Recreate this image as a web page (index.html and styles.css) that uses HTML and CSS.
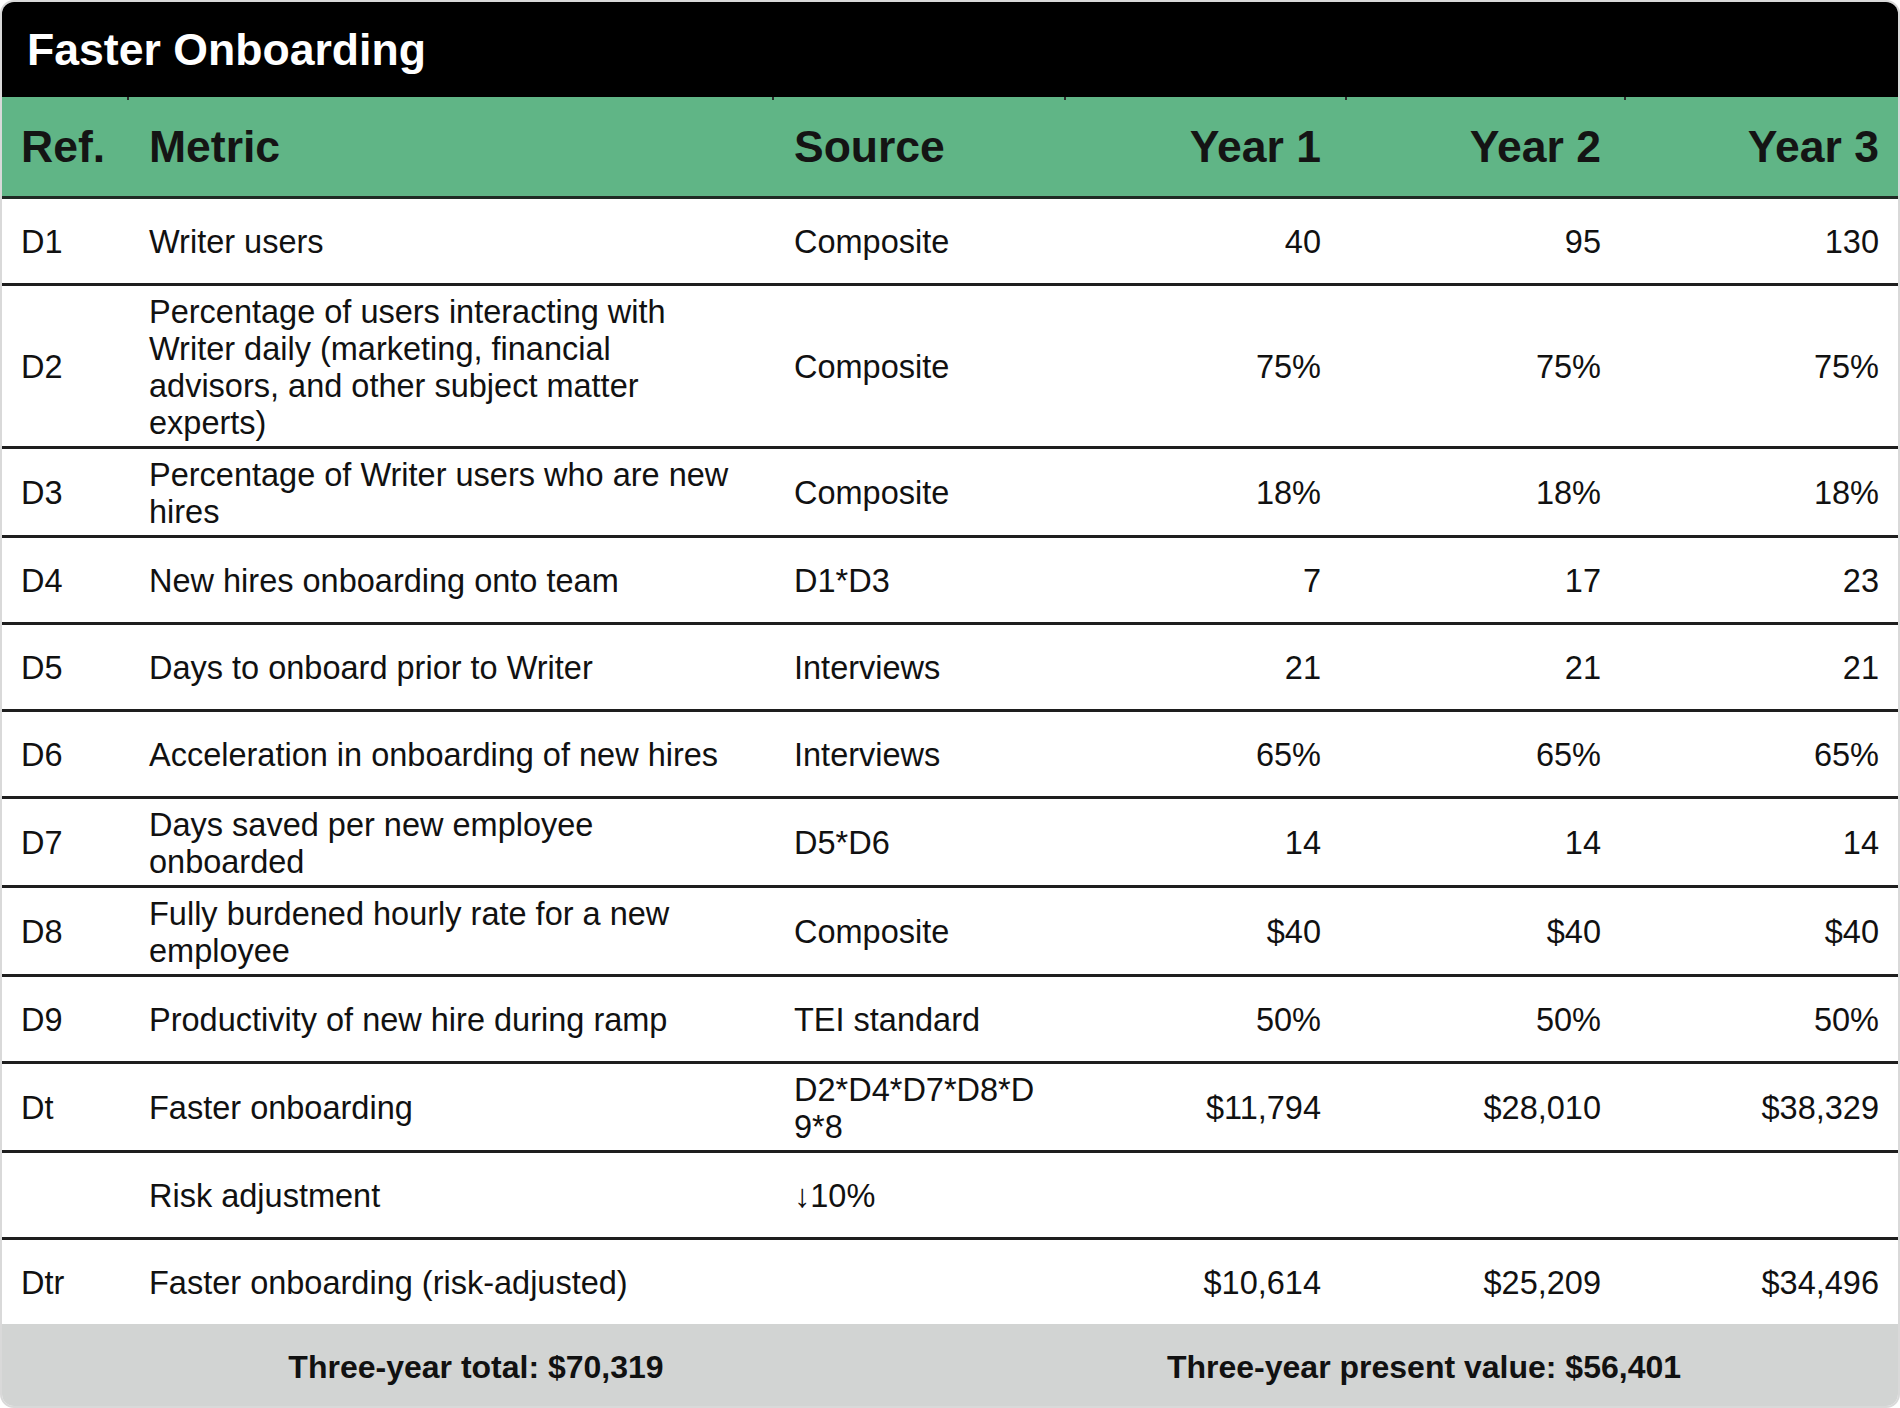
FILE: index.html
```html
<!DOCTYPE html>
<html lang="en">
<head>
<meta charset="utf-8">
<title>Faster Onboarding</title>
<link rel="stylesheet" href="styles.css">
</head>
<body>
<div class="card">
  <div class="title">Faster Onboarding</div>
  <table class="grid">
    <colgroup>
      <col class="c-ref">
      <col class="c-metric">
      <col class="c-source">
      <col class="c-y1">
      <col class="c-y2">
      <col class="c-y3">
    </colgroup>
    <thead>
      <tr>
        <th class="ref">Ref.</th>
        <th class="metric">Metric</th>
        <th class="source">Source</th>
        <th class="num y1">Year 1</th>
        <th class="num y2">Year 2</th>
        <th class="num y3">Year 3</th>
      </tr>
    </thead>
    <tbody>
      <tr>
        <td class="ref">D1</td><td class="metric">Writer users</td><td class="source">Composite</td>
        <td class="num y1">40</td><td class="num y2">95</td><td class="num y3">130</td>
      </tr>
      <tr>
        <td class="ref">D2</td><td class="metric">Percentage of users interacting with Writer daily (marketing, financial advisors, and other subject matter experts)</td><td class="source">Composite</td>
        <td class="num y1">75%</td><td class="num y2">75%</td><td class="num y3">75%</td>
      </tr>
      <tr>
        <td class="ref">D3</td><td class="metric">Percentage of Writer users who are new hires</td><td class="source">Composite</td>
        <td class="num y1">18%</td><td class="num y2">18%</td><td class="num y3">18%</td>
      </tr>
      <tr>
        <td class="ref">D4</td><td class="metric">New hires onboarding onto team</td><td class="source">D1*D3</td>
        <td class="num y1">7</td><td class="num y2">17</td><td class="num y3">23</td>
      </tr>
      <tr>
        <td class="ref">D5</td><td class="metric">Days to onboard prior to Writer</td><td class="source">Interviews</td>
        <td class="num y1">21</td><td class="num y2">21</td><td class="num y3">21</td>
      </tr>
      <tr>
        <td class="ref">D6</td><td class="metric">Acceleration in onboarding of new hires</td><td class="source">Interviews</td>
        <td class="num y1">65%</td><td class="num y2">65%</td><td class="num y3">65%</td>
      </tr>
      <tr>
        <td class="ref">D7</td><td class="metric">Days saved per new employee onboarded</td><td class="source">D5*D6</td>
        <td class="num y1">14</td><td class="num y2">14</td><td class="num y3">14</td>
      </tr>
      <tr>
        <td class="ref">D8</td><td class="metric">Fully burdened hourly rate for a new employee</td><td class="source">Composite</td>
        <td class="num y1">$40</td><td class="num y2">$40</td><td class="num y3">$40</td>
      </tr>
      <tr>
        <td class="ref">D9</td><td class="metric">Productivity of new hire during ramp</td><td class="source">TEI standard</td>
        <td class="num y1">50%</td><td class="num y2">50%</td><td class="num y3">50%</td>
      </tr>
      <tr>
        <td class="ref">Dt</td><td class="metric">Faster onboarding</td><td class="source formula">D2*D4*D7*D8*D9*8</td>
        <td class="num y1">$11,794</td><td class="num y2">$28,010</td><td class="num y3">$38,329</td>
      </tr>
      <tr>
        <td class="ref"></td><td class="metric">Risk adjustment</td><td class="source">↓10%</td>
        <td class="num y1"></td><td class="num y2"></td><td class="num y3"></td>
      </tr>
      <tr class="last">
        <td class="ref">Dtr</td><td class="metric">Faster onboarding (risk-adjusted)</td><td class="source"></td>
        <td class="num y1">$10,614</td><td class="num y2">$25,209</td><td class="num y3">$34,496</td>
      </tr>
    </tbody>
  </table>
  <div class="totals">
    <div class="total">Three-year total: $70,319</div>
    <div class="total">Three-year present value: $56,401</div>
  </div>
</div>
</body>
</html>
```

FILE: styles.css
```css
html, body {
  margin: 0;
  padding: 0;
  background: #ffffff;
}

body {
  font-family: "Liberation Sans", Arial, sans-serif;
  color: #111111;
}

.card {
  box-sizing: border-box;
  width: 1900px;
  height: 1408px;
  border: 2px solid #d9d9d9;
  border-radius: 14px;
  overflow: hidden;
  background: #ffffff;
  display: flex;
  flex-direction: column;
}

.title {
  background: #000000;
  color: #ffffff;
  font-weight: 700;
  font-size: 44.6px;
  height: 95px;
  display: flex;
  align-items: center;
  padding-left: 25px;
  flex: none;
}

.grid {
  width: 1896px;
  border-collapse: collapse;
  table-layout: fixed;
  flex: none;
}

.c-ref { width: 125px; }
.c-metric { width: 645px; }
.c-source { width: 292px; }
.c-y1 { width: 281px; }
.c-y2 { width: 279px; }
.c-y3 { width: 274px; }

.grid th {
  position: relative;
  background: #60b586;
  color: #141414;
  font-size: 44.5px;
  font-weight: 700;
  height: 100px;
  padding: 2px 22px 0;
  text-align: left;
  vertical-align: middle;
  border-bottom: 3px solid #1f2a24;
  box-sizing: border-box;
}

.grid th + th::before {
  content: "";
  position: absolute;
  left: 0;
  top: 0;
  width: 2px;
  height: 3px;
  background: #2b2b2b;
}

.grid td {
  font-size: 32.5px;
  line-height: 37px;
  height: 72px;
  padding: 8px 22px 4px;
  vertical-align: middle;
  text-align: left;
  border-bottom: 3px solid #1e1e1e;
}

.grid tr.last td {
  border-bottom: none;
}

.grid .ref {
  padding-left: 19px;
  padding-right: 8px;
}

.grid .metric {
  padding-left: 22px;
  padding-right: 38px;
}

.grid .source {
  padding-left: 22px;
  padding-right: 22px;
}

.grid .formula {
  word-break: break-all;
}

.grid .num {
  text-align: right;
}

.grid .y1 { padding-right: 24px; }
.grid .y2 { padding-right: 23px; }
.grid .y3 { padding-right: 19px; }

.totals {
  flex: 1;
  background: #d2d4d3;
  display: grid;
  grid-template-columns: 1fr 1fr;
  align-items: center;
  padding-top: 6px;
}

.total {
  text-align: center;
  font-size: 32px;
  font-weight: 700;
  color: #111111;
}
```
